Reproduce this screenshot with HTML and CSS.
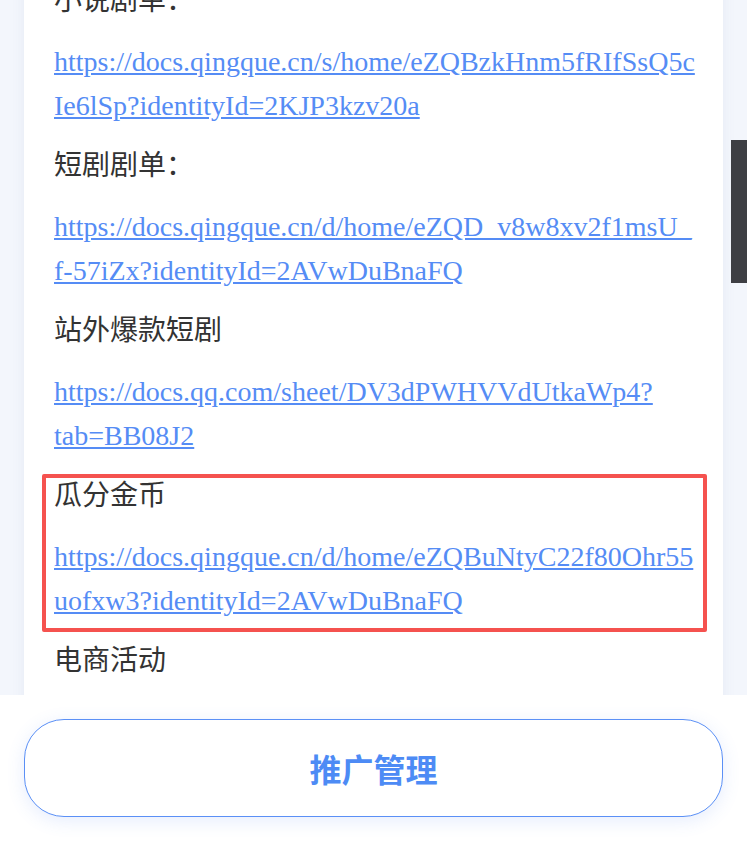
FILE: index.html
```html
<!DOCTYPE html>
<html lang="zh-CN">
<head>
<meta charset="utf-8">
<title>推广管理</title>
<link rel="stylesheet" href="styles.css">
</head>
<body>
<div class="page">
  <div class="scroll">
    <div class="card">
      <div class="item">
        <p class="label">小说剧单：</p>
        <p class="link"><a href="#">https://docs.qingque.cn/s/home/eZQBzkHnm5fRIfSsQ5cIe6lSp?identityId=2KJP3kzv20a</a></p>
      </div>
      <div class="item">
        <p class="label">短剧剧单：</p>
        <p class="link"><a href="#">https://docs.qingque.cn/d/home/eZQD_v8w8xv2f1msU_f-57iZx?identityId=2AVwDuBnaFQ</a></p>
      </div>
      <div class="item">
        <p class="label">站外爆款短剧</p>
        <p class="link"><a href="#">https://docs.qq.com/sheet/DV3dPWHVVdUtkaWp4?tab=BB08J2</a></p>
      </div>
      <div class="item marked">
        <p class="label">瓜分金币</p>
        <p class="link"><a href="#">https://docs.qingque.cn/d/home/eZQBuNtyC22f80Ohr55uofxw3?identityId=2AVwDuBnaFQ</a></p>
        <div class="mark"></div>
      </div>
      <div class="item">
        <p class="label">电商活动</p>
      </div>
    </div>
    <div class="scrollbar"></div>
  </div>
  <div class="footer">
    <button class="btn" type="button">推广管理</button>
  </div>
</div>
</body>
</html>
```

FILE: styles.css
```css
html, body {
  margin: 0;
  padding: 0;
}
body {
  background: #f3f6fc;
  font-family: "Noto Sans CJK SC", "Noto Sans", sans-serif;
}
.page {
  width: 747px;
  height: 842px;
  display: flex;
  flex-direction: column;
  overflow: hidden;
}
.scroll {
  position: relative;
  height: 695px;
  flex: none;
  overflow: hidden;
  background: #f3f6fc;
}
.card {
  margin: -24px 24px 0 24px;
  padding: 0 25px 40px 30px;
  background: #ffffff;
  box-shadow: 0 0 12px rgba(120, 140, 190, 0.10);
}
.item {
  position: relative;
}
.label {
  margin: 0;
  font-size: 28px;
  line-height: 44px;
  color: #333333;
  font-family: "Noto Sans CJK SC", "Noto Sans", sans-serif;
}
.link {
  margin: 20px 0 13px;
  font-family: "Liberation Serif", "Times New Roman", serif;
  font-size: 28px;
  line-height: 44px;
  overflow-wrap: break-word;
  word-wrap: break-word;
}
.link a {
  color: #558cf5;
  text-decoration: underline;
}
.mark {
  position: absolute;
  top: 3px;
  left: -12px;
  right: -9px;
  bottom: -9px;
  border: 4px solid #f5524f;
  border-radius: 2px;
  pointer-events: none;
}
.scrollbar {
  position: absolute;
  top: 140px;
  right: 0;
  width: 16px;
  height: 143px;
  background: #3e3f44;
}
.footer {
  flex: 1;
  background: #ffffff;
  padding: 24px 24px 0 24px;
}
.btn {
  display: block;
  width: 100%;
  height: 98px;
  box-sizing: border-box;
  border: 1px solid #5b90f6;
  border-radius: 40px;
  background: #ffffff;
  box-shadow: 0 4px 18px rgba(80, 130, 240, 0.14);
  color: #4d8bf5;
  font-family: "Noto Sans CJK SC", "Noto Sans", sans-serif;
  font-size: 32px;
  font-weight: 700;
  letter-spacing: 0;
  padding: 0;
  cursor: pointer;
}
```
